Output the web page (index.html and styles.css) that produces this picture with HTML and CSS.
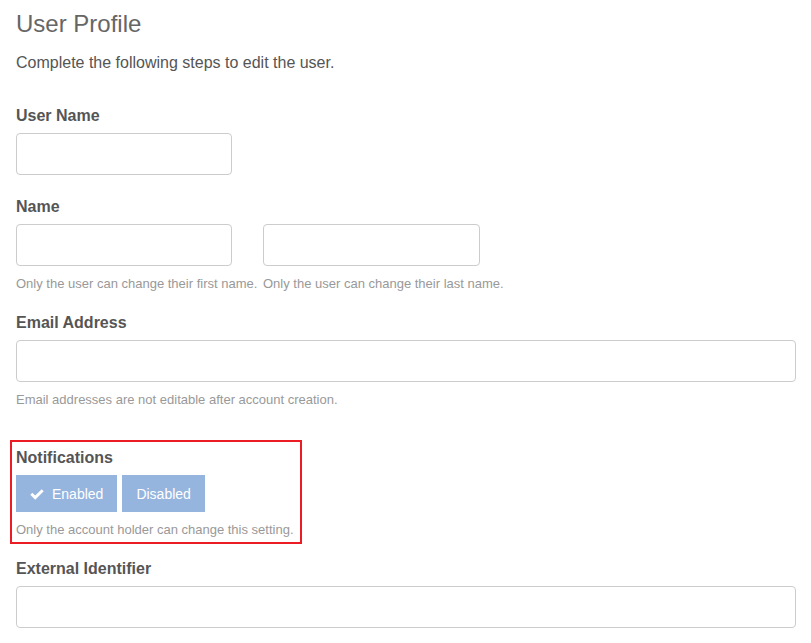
FILE: index.html
```html
<!DOCTYPE html>
<html lang="en">
<head>
  <meta charset="UTF-8">
  <title>User Profile</title>
  <link rel="stylesheet" href="styles.css">
</head>
<body>
  <div class="page">
    <h1 class="title">User Profile</h1>
    <p class="intro">Complete the following steps to edit the user.</p>

    <!-- User name -->
    <div class="field field-first">
      <label class="field-label" for="username">User Name</label>
      <input class="input input-half" id="username" type="text">
    </div>

    <!-- First / last name -->
    <div class="field">
      <label class="field-label" for="first-name">Name</label>
      <div class="name-row">
        <div class="name-col">
          <input class="input" id="first-name" type="text">
          <p class="hint">Only the user can change their first name.</p>
        </div>
        <div class="name-col">
          <input class="input" id="last-name" type="text">
          <p class="hint">Only the user can change their last name.</p>
        </div>
      </div>
    </div>

    <!-- Email -->
    <div class="field field-after-hint">
      <label class="field-label" for="email">Email Address</label>
      <input class="input" id="email" type="text">
      <p class="hint">Email addresses are not editable after account creation.</p>
    </div>

    <!-- Notifications (highlighted) -->
    <div class="highlight">
      <span class="field-label">Notifications</span>
      <div class="toggle">
        <button class="toggle-btn" type="button">
          <svg class="check" width="14" height="12" viewBox="0 0 14 12">
            <path d="M1.3 5.8 L5.2 9.6 L12.7 2.2" fill="none" stroke="#fff" stroke-width="3"/>
          </svg>
          Enabled
        </button>
        <button class="toggle-btn" type="button">Disabled</button>
      </div>
      <p class="hint">Only the account holder can change this setting.</p>
    </div>

    <!-- External identifier -->
    <div class="field">
      <label class="field-label" for="external-id">External Identifier</label>
      <input class="input" id="external-id" type="text">
    </div>
  </div>
</body>
</html>
```

FILE: styles.css
```css
* {
  margin: 0;
  padding: 0;
  box-sizing: border-box;
}

body {
  font-family: "Liberation Sans", Arial, sans-serif;
  background-color: #fff;
  color: #555;
}

.page {
  padding: 11px 15px 0 16px;
}

.title {
  font-size: 24px;
  font-weight: normal;
  line-height: 26px;
  color: #666;
}

.intro {
  margin-top: 16px;
  font-size: 16px;
  line-height: 20px;
}

.field {
  margin-top: 22px;
}

.field-first {
  margin-top: 33px;
}

.field-after-hint {
  margin-top: 21px;
}

.field-label {
  display: block;
  margin-bottom: 7px;
  font-size: 16px;
  font-weight: bold;
  line-height: 20px;
  color: #555;
}

.input {
  display: block;
  width: 100%;
  height: 42px;
  border: 1px solid #ccc;
  border-radius: 4px;
  background-color: #fff;
  font: inherit;
}

.input-half {
  width: 216px;
}

.name-row {
  display: grid;
  grid-template-columns: 216px 217px;
  column-gap: 31px;
}

.hint {
  margin-top: 10px;
  font-size: 13px;
  line-height: 16px;
  color: #999;
  white-space: nowrap;
}

/* red annotation box */
.highlight {
  width: fit-content;
  margin: 32px 0 0 -6px;
  padding: 6px 6px 4px 4px;
  border: 2px solid #ec1c24;
}

.toggle {
  display: flex;
  gap: 5px;
}

.toggle-btn {
  display: flex;
  align-items: center;
  gap: 8px;
  height: 37px;
  padding: 0 14px;
  border: none;
  background-color: #95b4de;
  color: #fff;
  font-family: inherit;
  font-size: 14px;
}

.check {
  display: block;
}

.highlight + .field {
  margin-top: 15px;
}
```
